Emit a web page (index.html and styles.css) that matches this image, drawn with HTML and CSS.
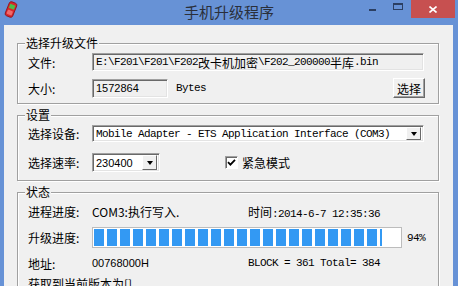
FILE: index.html
```html
<!DOCTYPE html>
<html lang="zh-CN">
<head>
    <meta charset="UTF-8">
    <title>手机升级程序</title>
    <link rel="stylesheet" href="styles.css">
</head>
<body>
<div class="window">

    <!-- 标题栏 -->
    <div class="titlebar">
        <svg class="app-icon" viewBox="0 0 14 17" width="14" height="17">
            <g transform="rotate(22 7 8.5)">
                <rect x="3" y="1" width="8" height="15" rx="2.2" fill="#d8262c" stroke="#8e1216" stroke-width="0.8"/>
                <rect x="4.3" y="3.4" width="5.4" height="4.2" fill="#4cbf48"/>
                <rect x="4.3" y="9.5" width="5.4" height="4.5" rx="0.8" fill="#f06a6a"/>
            </g>
        </svg>
        <div class="title">手机升级程序</div>
        <div class="caption-buttons">
            <span class="cap cap-min"><i></i></span>
            <span class="cap cap-max"><i></i></span>
            <span class="cap cap-close">
                <svg viewBox="0 0 8 7" width="8" height="7">
                    <path d="M0.5 0.5 L7.5 6.5 M7.5 0.5 L0.5 6.5" stroke="#fff" stroke-width="1.6"/>
                </svg>
            </span>
        </div>
    </div>

    <div class="client">

        <!-- 选择升级文件 -->
        <div class="group group-file">
            <div class="group-title">选择升级文件</div>
            <div class="row row-path">
                <span class="label">文件:</span>
                <div class="field field-path mono">E:\F201\F201\F202<span class="cjk">改卡机加密</span>\F202_200000<span class="cjk">半库</span>.bin</div>
            </div>
            <div class="row row-size">
                <span class="label">大小:</span>
                <div class="field field-size num">1572864</div>
                <span class="unit mono">Bytes</span>
                <button class="btn-choose">选择</button>
            </div>
        </div>

        <!-- 设置 -->
        <div class="group group-settings">
            <div class="group-title">设置</div>
            <div class="row row-device">
                <span class="label">选择设备:</span>
                <div class="combo combo-device">
                    <span class="combo-text mono">Mobile Adapter - ETS Application Interface (COM3)</span>
                    <span class="combo-arrow"></span>
                </div>
            </div>
            <div class="row row-speed">
                <span class="label">选择速率:</span>
                <div class="combo combo-speed">
                    <span class="combo-text num">230400</span>
                    <span class="combo-arrow"></span>
                </div>
                <span class="checkbox">
                    <svg viewBox="0 0 9 9" width="9" height="9">
                        <path d="M1 4.2 L3.4 6.6 L8 1.8" fill="none" stroke="#000" stroke-width="1.8"/>
                    </svg>
                </span>
                <span class="check-label">紧急模式</span>
            </div>
        </div>

        <!-- 状态 -->
        <div class="group group-status">
            <div class="group-title">状态</div>
            <div class="row row-stage">
                <span class="label">进程进度:</span>
                <span class="value">COM3:执行写入.</span>
                <span class="side"><span class="cjk">时间</span><span class="mono">:2014-6-7 12:35:36</span></span>
            </div>
            <div class="row row-progress">
                <span class="label">升级进度:</span>
                <div class="progress">
                    <div class="progress-fill" style="width: 94%"></div>
                </div>
                <span class="percent mono">94%</span>
            </div>
            <div class="row row-address">
                <span class="label">地址:</span>
                <span class="value num">00768000H</span>
                <span class="side mono">BLOCK = 361 Total= 384</span>
            </div>
            <div class="row row-version">获取到当前版本为[]</div>
        </div>

    </div>
</div>
</body>
</html>
```

FILE: styles.css
```css
body {
    margin: 0;
}

.window {
    width: 458px;
    height: 286px;
    overflow: hidden;
    background: #6792d6;
    display: flex;
    flex-direction: column;
    font-family: "Noto Sans CJK SC", "Liberation Sans", sans-serif;
    font-size: 12px;
    color: #000;
}

/* 标题栏 */
.titlebar {
    height: 25px;
    flex: none;
    display: grid;
    grid-template-columns: 1fr auto 1fr;
    align-items: start;
}

.app-icon {
    margin: 1px 0 0 4px;
}

.title {
    font-size: 15px;
    line-height: 23px;
    color: #2a2f3a;
}

.caption-buttons {
    justify-self: end;
    display: flex;
    margin-right: 3px;
}

.cap {
    height: 18px;
    display: flex;
    justify-content: center;
}

.cap-min {
    width: 26px;
    align-items: flex-start;
}

.cap-min i {
    width: 7px;
    height: 2px;
    margin-top: 9px;
    background: #2b3f63;
}

.cap-max {
    width: 26px;
    align-items: flex-start;
}

.cap-max i {
    width: 10px;
    height: 7px;
    margin-top: 3px;
    box-sizing: border-box;
    border: 1px solid #2b3f63;
    border-top-width: 2px;
}

.cap-close {
    width: 44px;
    align-items: center;
    background: #c75050;
}

/* 客户区 */
.client {
    flex: 1;
    margin: 0 5px 0 4px;
    padding: 18px 14px 0 13px;
    background: #f0f0f0;
}

.group {
    border: 1px solid #a0a0a0;
    box-shadow: inset 1px 1px 0 #fff, 1px 1px 0 #fff;
    padding: 0 13px 5px 10px;
}

.group + .group {
    margin-top: 11px;
}

.group-title {
    display: table;
    margin: -9px 0 0 -3px;
    padding: 0 1px;
    height: 16px;
    line-height: 16px;
    background: #f0f0f0;
}

.row {
    display: flex;
    align-items: center;
}

.label {
    width: 64px;
    flex: none;
}

.mono {
    font-family: "Liberation Mono", monospace;
    font-size: 11px;
    letter-spacing: -0.6px;
}

.cjk {
    font-family: "Noto Sans CJK SC", sans-serif;
    font-size: 12px;
    letter-spacing: 0;
}

.num {
    font-family: "Liberation Sans", sans-serif;
    font-size: 11px;
}

/* 凹陷输入框 */
.field,
.combo {
    box-sizing: border-box;
    border: 1px solid;
    border-color: #a0a0a0 #fff #fff #a0a0a0;
    box-shadow: inset 1px 1px 0 #696969, inset -1px -1px 0 #e3e3e3;
    display: flex;
    align-items: center;
    white-space: nowrap;
    overflow: hidden;
}

.row-path {
    margin-top: 2px;
    height: 18px;
}

.field-path {
    width: 332px;
    height: 18px;
    padding-left: 3px;
    background: #f0f0f0;
}

.row-size {
    margin-top: 7px;
    height: 20px;
}

.field-size {
    width: 76px;
    height: 19px;
    padding-left: 3px;
    background: #f0f0f0;
}

.unit {
    margin-left: 8px;
}

.btn-choose {
    margin-left: auto;
    width: 32px;
    height: 20px;
    padding: 0;
    font: inherit;
    background: #f0f0f0;
    border: 1px solid;
    border-color: #fff #696969 #696969 #fff;
    box-shadow: inset -1px -1px 0 #a0a0a0;
}

/* 设置 */
.group-settings {
    padding-bottom: 8px;
}

.row-device {
    margin-top: 2px;
    height: 17px;
}

.combo {
    background: #fff;
    padding: 0 2px 0 3px;
}

.combo-device {
    width: 332px;
    height: 17px;
}

.combo-text {
    flex: 1;
}

.combo-arrow {
    flex: none;
    width: 15px;
    height: 13px;
    box-sizing: border-box;
    border: 1px solid;
    border-color: #fff #696969 #696969 #fff;
    background: #f0f0f0;
    display: flex;
    align-items: center;
    justify-content: center;
}

.combo-arrow::before {
    content: "";
    border-left: 3.5px solid transparent;
    border-right: 3.5px solid transparent;
    border-top: 4px solid #000;
}

.row-speed {
    margin-top: 11px;
    height: 19px;
}

.combo-speed {
    width: 68px;
    height: 19px;
}

.combo-speed .combo-arrow {
    height: 15px;
}

.checkbox {
    width: 13px;
    height: 13px;
    margin-left: 65px;
    box-sizing: border-box;
    border: 1px solid;
    border-color: #a0a0a0 #fff #fff #a0a0a0;
    box-shadow: inset 1px 1px 0 #696969;
    background: #fff;
    display: flex;
    align-items: center;
    justify-content: center;
}

.check-label {
    margin-left: 4px;
}

/* 状态 */
.group-status {
    padding-bottom: 20px;
}

.row-stage {
    margin-top: 3px;
    height: 16px;
}

.value {
    width: 156px;
    flex: none;
}

.row-progress {
    margin-top: 8px;
    height: 21px;
}

.progress {
    width: 310px;
    height: 21px;
    box-sizing: border-box;
    border: 1px solid #bcbcbc;
    background: #fff;
    padding: 1px;
}

.progress-fill {
    height: 100%;
    background: repeating-linear-gradient(90deg, #3399f3 0, #3399f3 10px, #fff 10px, #fff 13px);
}

.percent {
    margin-left: 5px;
}

.row-address {
    margin-top: 7px;
    height: 16px;
}

.row-version {
    margin-top: 4px;
    height: 16px;
}
```
